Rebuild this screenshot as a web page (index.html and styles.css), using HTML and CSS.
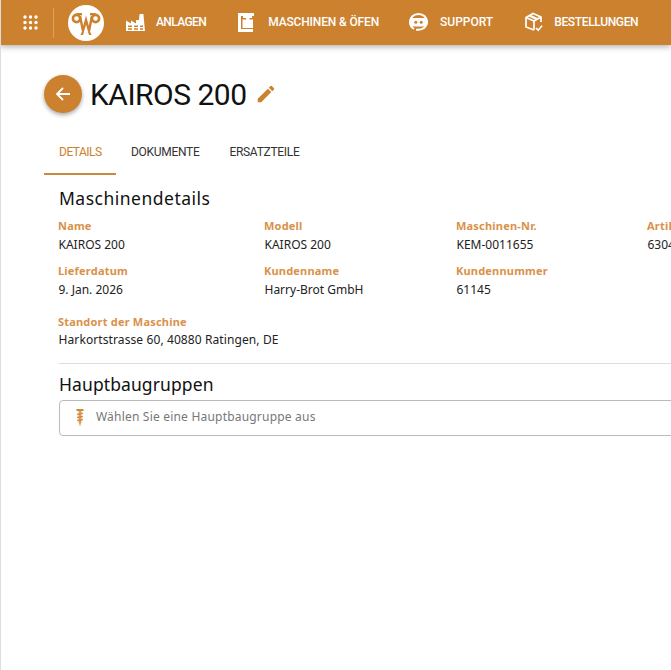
FILE: index.html
```html
<!DOCTYPE html>
<html lang="de">
<head>
  <meta charset="UTF-8" />
  <title>KAIROS 200</title>
  <link rel="stylesheet" href="styles.css">
</head>
<body>
  <header class="topbar">
    <button class="apps-btn" aria-label="Apps">
      <svg width="15" height="15" viewBox="0 0 15 15" fill="#fff">
        <circle cx="2" cy="2" r="1.7"/><circle cx="7.5" cy="2" r="1.7"/><circle cx="13" cy="2" r="1.7"/>
        <circle cx="2" cy="7.5" r="1.7"/><circle cx="7.5" cy="7.5" r="1.7"/><circle cx="13" cy="7.5" r="1.7"/>
        <circle cx="2" cy="13" r="1.7"/><circle cx="7.5" cy="13" r="1.7"/><circle cx="13" cy="13" r="1.7"/>
      </svg>
    </button>
    <span class="divider"></span>
    <svg class="logo" width="36" height="36" viewBox="0 0 36 36">
      <circle cx="18" cy="18" r="18" fill="#fff"/>
      <g fill="none" stroke="#cc812e">
        <circle cx="8.5" cy="13.5" r="3.6" stroke-width="2.6"/>
        <circle cx="27.5" cy="13.5" r="3.6" stroke-width="2.6"/>
        <path d="M8.5 9.2 H14 M27.5 9.2 H22" stroke-width="2.2"/>
        <path d="M12 11 L15 26 L18 15 L21 26 L24 11" stroke-width="2.4"/>
      </g>
      <path d="M15 24 L12.5 30 H15 L16 27 Z M21 24 L23.5 30 H21 L20 27 Z" fill="#cc812e"/>
    </svg>
    <nav class="nav">
      <a class="nav-item item-anlagen">
        <svg width="19" height="19" viewBox="0 0 19 19" fill="#fff">
          <path d="M0 18 V7.5 L5 10.5 V7.5 L10 10.5 V7 H13 L13.6 1 H17.4 L19 18 Z M2 12.5 V14 H6 V12.5 Z M8 12.5 V14 H12 V12.5 Z M14 12.5 V14 H17 V12.5 Z M2 15.3 V16.7 H6 V15.3 Z M8 15.3 V16.7 H12 V15.3 Z M14 15.3 V16.7 H17 V15.3 Z" fill-rule="evenodd"/>
        </svg>
        ANLAGEN
      </a>
      <a class="nav-item item-maschinen">
        <svg width="16" height="19" viewBox="0 0 16 19" fill="#fff">
          <path d="M0 0 H16 V3 H3 V16 H15 V19 H0 Z" />
          <path d="M5 3 H14 V5 H11.5 V6.5 H15 V15 H4.5 V6.5 H8 V5 H5 Z"/>
        </svg>
        MASCHINEN &amp; ÖFEN
      </a>
      <a class="nav-item item-support">
        <svg width="19" height="18" viewBox="0 0 19 18">
          <path d="M5 16 C2.500 14.500 1 12 1 9 C1 4.500 4.500 1 9.500 1 C14.500 1 18 4.500 18 9 C18 13.500 14.500 16.800 9.500 16.800 H7" fill="none" stroke="#fff" stroke-width="2"/>
          <rect x="0" y="5" width="19" height="8.500" rx="4.200" fill="#fff"/>
          <circle cx="6.800" cy="9.200" r="1.500" fill="#cc812e"/>
          <circle cx="12.200" cy="9.200" r="1.500" fill="#cc812e"/>
        </svg>
        SUPPORT
      </a>
      <a class="nav-item item-bestellungen">
        <svg width="19" height="20" viewBox="0 0 19 20" fill="none" stroke="#fff" stroke-width="1.7">
          <path d="M10 18 L2 15 V5.5 L9 1.5 L17 5 V10"/>
          <path d="M2 5.5 L10 9 L17 5 M10 9 V18"/>
          <path d="M5.5 3.500 L13 7.200" stroke-width="2.400"/>
          <path d="M12 16 L14.200 18.200 L18 13.800"/>
        </svg>
        BESTELLUNGEN
      </a>
    </nav>
  </header>

  <main class="content">
    <div class="title-row">
      <button class="back-btn" aria-label="Zurück">
        <svg width="16" height="16" viewBox="0 0 16 16" fill="none" stroke="#fff" stroke-width="1.8">
          <path d="M15 8 H2 M8 2 L2 8 L8 14"/>
        </svg>
      </button>
      <h1>KAIROS 200</h1>
      <svg class="edit-icon" width="22" height="22" viewBox="0 0 24 24" fill="#cc812e">
        <path d="M3 17.250V21h3.750L17.810 9.940l-3.750-3.750L3 17.250zM20.710 7.040a1 1 0 0 0 0-1.410l-2.340-2.340a1 1 0 0 0-1.410 0l-1.830 1.830 3.750 3.750 1.830-1.830z"/>
      </svg>
    </div>

    <div class="tabs">
      <a class="tab active">DETAILS</a>
      <a class="tab">DOKUMENTE</a>
      <a class="tab">ERSATZTEILE</a>
    </div>

    <section class="details">
      <h2>Maschinendetails</h2>
      <div class="detail-grid">
        <div class="field"><label>Name</label><span>KAIROS 200</span></div>
        <div class="field"><label>Modell</label><span>KAIROS 200</span></div>
        <div class="field"><label>Maschinen-Nr.</label><span>KEM-0011655</span></div>
        <div class="field"><label>Artikel-Nr.</label><span>630400</span></div>
        <div class="field"><label>Lieferdatum</label><span>9. Jan. 2026</span></div>
        <div class="field"><label>Kundenname</label><span>Harry-Brot GmbH</span></div>
        <div class="field"><label>Kundennummer</label><span>61145</span></div>
      </div>
      <div class="field location"><label>Standort der Maschine</label><span>Harkortstrasse 60, 40880 Ratingen, DE</span></div>
      <hr />
      <h2 class="group-title">Hauptbaugruppen</h2>
      <div class="select-box">
        <svg width="8" height="18" viewBox="0 0 8 19" fill="#dba364">
          <rect x="0" y="0" width="8" height="2" rx="1" fill="#d08a36"/>
          <path d="M2.500 2 H5.500 V14 L4 18.500 L2.500 14 Z"/>
          <path d="M1 5 L7 3.800 V5.400 L1 6.600 Z M1 8.200 L7 7 V8.600 L1 9.800 Z M1 11.400 L7 10.200 V11.800 L1 13 Z" fill="#d08a36"/>
        </svg>
        <span>Wählen Sie eine Hauptbaugruppe aus</span>
      </div>
    </section>
  </main>
</body>
</html>
```

FILE: styles.css
```css
* {
  box-sizing: border-box;
}
html, body {
  height: 100%;
}
body {
  margin: 0;
  width: 671px;
  height: 670px;
  overflow: hidden;
  font-family: "Noto Sans", sans-serif;
  background: #fff;
  color: #222;
  border-left: 1px solid #ddd;
}
.topbar {
  display: flex;
  align-items: center;
  height: 45px;
  margin-left: -1px;
  background: #cc812e;
  color: #fff;
  box-shadow: 0 2px 6px rgba(0, 0, 0, 0.3);
}
.apps-btn {
  display: flex;
  margin-left: 23px;
  padding: 0;
  border: none;
  background: none;
}
.divider {
  width: 1px;
  height: 30px;
  margin-left: 15px;
  background: #dca263;
}
.logo {
  margin-left: 14px;
}
.nav {
  display: flex;
  align-items: center;
  margin-left: 22px;
  padding-bottom: 1px;
}
.nav-item {
  display: flex;
  align-items: center;
  gap: 11px;
  font-family: Roboto, sans-serif;
  font-size: 12px;
  font-weight: 500;
  white-space: nowrap;
}
.item-anlagen {
  letter-spacing: -0.6px;
}
.item-maschinen {
  margin-left: 32px;
  gap: 14px;
  letter-spacing: -0.15px;
}
.item-support {
  margin-left: 30px;
  gap: 12px;
}
.item-bestellungen {
  margin-left: 31px;
  letter-spacing: -0.35px;
}
.content {
  padding: 30px 0 0 43px;
}
.title-row {
  display: flex;
  align-items: center;
  height: 38px;
}
.back-btn {
  display: flex;
  align-items: center;
  justify-content: center;
  width: 38px;
  height: 38px;
  padding: 0;
  border: none;
  border-radius: 50%;
  background: #cc812e;
  box-shadow: 0 2px 4px rgba(0, 0, 0, 0.35);
}
h1 {
  margin: 0 0 0 8px;
  font-family: Roboto, sans-serif;
  font-size: 30px;
  font-weight: 400;
  letter-spacing: -0.5px;
  color: #111;
}
.edit-icon {
  margin-left: 8px;
}
.tabs {
  display: flex;
  margin-top: 23px;
}
.tab {
  padding: 0 15px;
  height: 39px;
  line-height: 32px;
  font-family: Roboto, sans-serif;
  font-size: 12px;
  letter-spacing: -0.3px;
  color: #333;
  border-bottom: 2px solid transparent;
}
.tab.active {
  width: 72px;
  letter-spacing: -0.5px;
  color: #cc812e;
  border-bottom-color: #c98a3a;
}
.details {
  padding-left: 15px;
}
h2 {
  margin: 0;
  font-size: 17.500px;
  font-weight: 400;
  letter-spacing: 0.5px;
  color: #111;
}
.details > h2:first-child {
  margin-top: 11px;
}
.detail-grid {
  display: grid;
  grid-template-columns: 206px 192px 191px 200px;
  row-gap: 10px;
  width: 789px;
  margin-top: 8px;
}
.field {
  display: flex;
  flex-direction: column;
  gap: 3px;
  font-size: 12px;
  white-space: nowrap;
}
.field span {
  margin-left: -0.5px;
}
.field label {
  margin-left: -1px;
  font-size: 11px;
  font-weight: 700;
  letter-spacing: 0.2px;
  color: #d9914a;
}
.location {
  gap: 2px;
  margin-top: 16px;
}
.location span {
  letter-spacing: 0.1px;
}
hr {
  margin: 15px 0 9px;
  border: none;
  border-top: 1px solid #ddd;
}
.group-title {
  line-height: 22px;
  letter-spacing: 0.1px;
}
.select-box {
  display: flex;
  align-items: center;
  gap: 12px;
  width: 700px;
  height: 36px;
  margin-top: 5px;
  padding-left: 16px;
  border: 1px solid #bbb;
  border-radius: 4px;
  font-size: 12px;
  letter-spacing: 0.2px;
  color: #777;
}
.select-box span {
  padding-bottom: 3px;
}
```
